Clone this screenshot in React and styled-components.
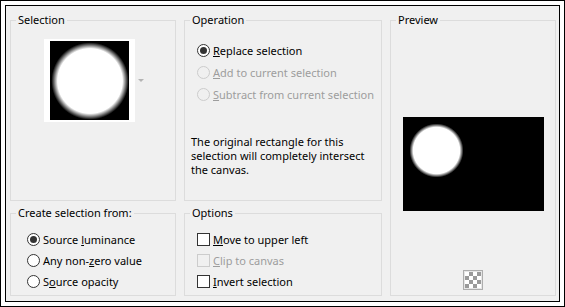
import React from "react";
import styled, { createGlobalStyle } from "styled-components";

const GlobalStyle = createGlobalStyle`
  html, body {
    margin: 0;
    padding: 0;
    background: #ffffff;
  }
  body {
    font-family: "Noto Sans", "Open Sans", sans-serif;
    font-size: 11px;
    color: #000000;
  }
`;

const Frame = styled.div`
  width: 565px;
  height: 307px;
  box-sizing: border-box;
  border: 1px solid #000;
  padding: 4px;
  background: #fff;
`;

const Panel = styled.div`
  height: 100%;
  box-sizing: border-box;
  border: 1px solid #000;
  background: #f0f0f0;
  padding: 6px 0 0 4px;
  display: grid;
  grid-template-columns: 166px 198px 166px;
  grid-template-rows: 189px 91px;
  column-gap: 8px;
  row-gap: 4px;
`;

const Group = styled.fieldset`
  margin: 0;
  padding: 0;
  min-width: 0;
  border: 1px solid #dcdcdc;
  display: flex;
  flex-direction: column;
  grid-column: ${({ $col }) => $col};
  grid-row: ${({ $row }) => $row};
`;

const Legend = styled.legend`
  margin-left: 5px;
  padding: 0 2px;
  line-height: 16px;
  font-size: 11px;
  color: #000;
`;

const ThumbRow = styled.div`
  display: flex;
  align-items: center;
  gap: 3px;
  margin: 11px 0 0 33px;
`;

const Thumb = styled.div`
  width: 91px;
  height: 83px;
  background: #fff;
  display: flex;
  align-items: center;
  justify-content: center;
`;

const ThumbImage = styled.div`
  width: 79px;
  height: 79px;
  background: radial-gradient(circle 39px at 40px 40px, #fff 83%, #000 99%), #000;
`;

const DropArrow = styled.span`
  width: 0;
  height: 0;
  border-left: 3px solid transparent;
  border-right: 3px solid transparent;
  border-top: 3px solid #b4b4b4;
`;

const OptionList = styled.div`
  display: flex;
  flex-direction: column;
  margin-top: ${({ $top }) => $top}px;
  padding-left: ${({ $left }) => $left}px;
`;

const Option = styled.div`
  height: ${({ $h }) => $h}px;
  display: flex;
  align-items: center;
  gap: 3px;
  white-space: nowrap;
  color: ${({ $disabled }) => ($disabled ? "#9d9d9d" : "#000")};
`;

const Radio = styled.span`
  width: 13px;
  height: 13px;
  box-sizing: border-box;
  border-radius: 50%;
  border: 1px solid ${({ $disabled }) => ($disabled ? "#cccccc" : "#333333")};
  background: ${({ $disabled }) => ($disabled ? "#f0f0f0" : "#ffffff")};
  display: flex;
  align-items: center;
  justify-content: center;
  flex: none;
  &::after {
    content: "";
    width: 7px;
    height: 7px;
    border-radius: 50%;
    background: ${({ $checked }) => ($checked ? "#333333" : "transparent")};
  }
`;

const Check = styled.span`
  width: 13px;
  height: 13px;
  box-sizing: border-box;
  border: 1px solid ${({ $disabled }) => ($disabled ? "#cccccc" : "#333333")};
  background: ${({ $disabled }) => ($disabled ? "#f0f0f0" : "#ffffff")};
  flex: none;
`;

const Note = styled.p`
  margin: 30px 0 0 6px;
  line-height: 14px;
  color: #000;
`;

const PreviewImage = styled.div`
  width: 141px;
  height: 94px;
  margin: 89px auto 0;
  background: radial-gradient(circle 27px at 33.5px 33.5px, #fff 86%, #000 100%), #000;
`;

const CheckerButton = styled.div`
  width: 20px;
  height: 20px;
  box-sizing: border-box;
  margin: 59px auto 0;
  border: 1px solid #adadad;
  padding: 1px;
  background: #e6e6e6;
  &::after {
    content: "";
    display: block;
    width: 16px;
    height: 16px;
    background: repeating-conic-gradient(#9a9a9a 0 25%, #ffffff 0 50%) 0 0 / 8px 8px;
  }
`;

const operations = [
  { key: "R", rest: "eplace selection", checked: true },
  { key: "A", rest: "dd to current selection", disabled: true },
  { key: "S", rest: "ubtract from current selection", disabled: true },
];

const sources = [
  { before: "Source ", key: "l", rest: "uminance", checked: true },
  { before: "Any non-", key: "z", rest: "ero value" },
  { before: "S", key: "o", rest: "urce opacity" },
];

const options = [
  { key: "M", rest: "ove to upper left" },
  { key: "C", rest: "lip to canvas", disabled: true },
  { key: "I", rest: "nvert selection" },
];

const App = () => {
  return (
    <>
      <GlobalStyle />
      <Frame>
        <Panel>
          <Group $col={1} $row={1}>
            <Legend>Selection</Legend>
            <ThumbRow>
              <Thumb>
                <ThumbImage />
              </Thumb>
              <DropArrow />
            </ThumbRow>
          </Group>

          <Group $col={2} $row={1}>
            <Legend>Operation</Legend>
            <OptionList $top={11} $left={12}>
              {operations.map((o) => (
                <Option key={o.key} $h={22} $disabled={o.disabled}>
                  <Radio $checked={o.checked} $disabled={o.disabled} />
                  <span>
                    <u>{o.key}</u>
                    {o.rest}
                  </span>
                </Option>
              ))}
            </OptionList>
            <Note>
              The original rectangle for this
              <br />
              selection will completely intersect
              <br />
              the canvas.
            </Note>
          </Group>

          <Group $col={3} $row="1 / span 2">
            <Legend>Preview</Legend>
            <PreviewImage />
            <CheckerButton />
          </Group>

          <Group $col={1} $row={2}>
            <Legend>Create selection from:</Legend>
            <OptionList $top={8} $left={16}>
              {sources.map((o) => (
                <Option key={o.key} $h={21}>
                  <Radio $checked={o.checked} />
                  <span>
                    {o.before}
                    <u>{o.key}</u>
                    {o.rest}
                  </span>
                </Option>
              ))}
            </OptionList>
          </Group>

          <Group $col={2} $row={2}>
            <Legend>Options</Legend>
            <OptionList $top={8} $left={12}>
              {options.map((o) => (
                <Option key={o.key} $h={21} $disabled={o.disabled}>
                  <Check $disabled={o.disabled} />
                  <span>
                    <u>{o.key}</u>
                    {o.rest}
                  </span>
                </Option>
              ))}
            </OptionList>
          </Group>
        </Panel>
      </Frame>
    </>
  );
};

export default App;
